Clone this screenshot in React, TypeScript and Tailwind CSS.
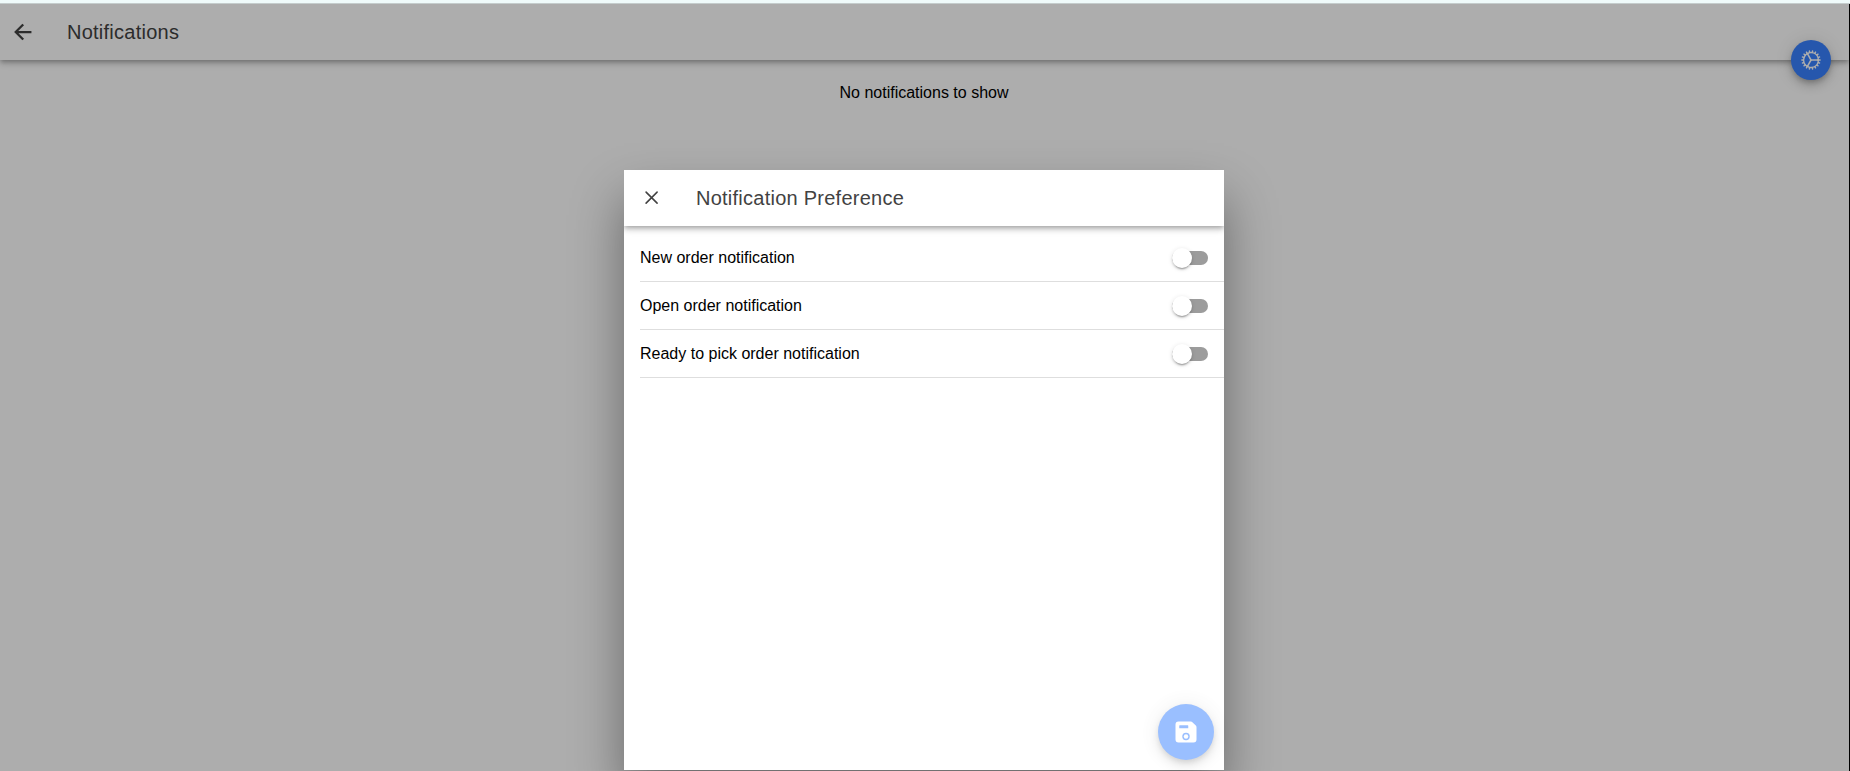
import React from "react";
import { IoArrowBackSharp, IoCogOutline, IoCloseOutline, IoSave } from "react-icons/io5";

const preferences = ["New order notification", "Open order notification", "Ready to pick order notification"];
const headerShadow =
  "shadow-[0_2px_4px_-1px_rgba(0,0,0,0.2),0_4px_5px_0_rgba(0,0,0,0.14),0_1px_10px_0_rgba(0,0,0,0.12)]";

function Toggle() {
  return (
    <button role="switch" aria-checked="false" className="flex h-[14px] w-9 items-center rounded-full bg-[#9c9c9c]">
      <span className="size-5 shrink-0 rounded-full bg-white shadow-[0_3px_1px_-2px_rgba(0,0,0,0.2),0_2px_2px_0_rgba(0,0,0,0.14),0_1px_5px_0_rgba(0,0,0,0.12)]" />
    </button>
  );
}

function PreferenceModal() {
  return (
    <section
      role="dialog"
      className="absolute left-[624px] top-[166px] flex h-[600px] w-[600px] flex-col bg-white shadow-[0_28px_48px_rgba(0,0,0,0.4)]"
    >
      <header className={`flex h-14 items-center bg-white ${headerShadow} [clip-path:inset(0_0_-16px_0)]`}>
        <button aria-label="Close" className="ml-1 flex size-12 items-center justify-center text-[#424242]">
          <IoCloseOutline className="mb-px size-[25.2px]" />
        </button>
        <h2 className="ml-5 text-[20px] font-medium tracking-[0.0125em] text-[#424242]">Notification Preference</h2>
      </header>
      <ul className="flex-1 py-2 pl-4">
        {preferences.map((label) => (
          <li key={label} className="flex h-12 items-center justify-between border-b border-[#dedede] pr-4">
            <span className="text-base text-black">{label}</span>
            <Toggle />
          </li>
        ))}
      </ul>
      <button
        aria-label="Save"
        disabled
        className="absolute bottom-[10px] right-[10px] flex size-14 items-center justify-center rounded-full bg-[#3880ff] text-white opacity-50 shadow-[0_3px_5px_-1px_rgba(0,0,0,0.2),0_6px_10px_0_rgba(0,0,0,0.14),0_1px_18px_0_rgba(0,0,0,0.12)]"
      >
        <IoSave className="size-6" />
      </button>
    </section>
  );
}

export default function App() {
  return (
    <div className="flex h-[771px] w-[1850px] flex-col overflow-hidden bg-black font-['Liberation_Sans',Arial,sans-serif]">
      <div className="h-1 w-full shrink-0 border-b border-[#c4cccc] bg-[#effafa]" />
      <div className="relative w-[1849px] flex-1 overflow-hidden bg-white">
        <header className={`relative flex h-14 items-center bg-white ${headerShadow}`}>
          <button aria-label="Back" className="ml-[11px] text-[#424242]">
            <IoArrowBackSharp className="size-6" />
          </button>
          <h1 className="ml-8 text-[20px] font-medium tracking-[0.0125em] text-[#424242]">Notifications</h1>
        </header>
        <main className="pt-[21px] pr-px">
          <p className="text-center text-base text-black">No notifications to show</p>
        </main>
        <button
          aria-label="Settings"
          className="absolute right-[18px] top-9 flex size-10 items-center justify-center rounded-full bg-[#3880ff] text-white shadow-[0_3px_5px_-1px_rgba(0,0,0,0.2),0_6px_10px_0_rgba(0,0,0,0.14),0_1px_18px_0_rgba(0,0,0,0.12)]"
        >
          <IoCogOutline className="size-6" />
        </button>
        <div className="absolute inset-0 bg-black/32" />
        <PreferenceModal />
      </div>
    </div>
  );
}
